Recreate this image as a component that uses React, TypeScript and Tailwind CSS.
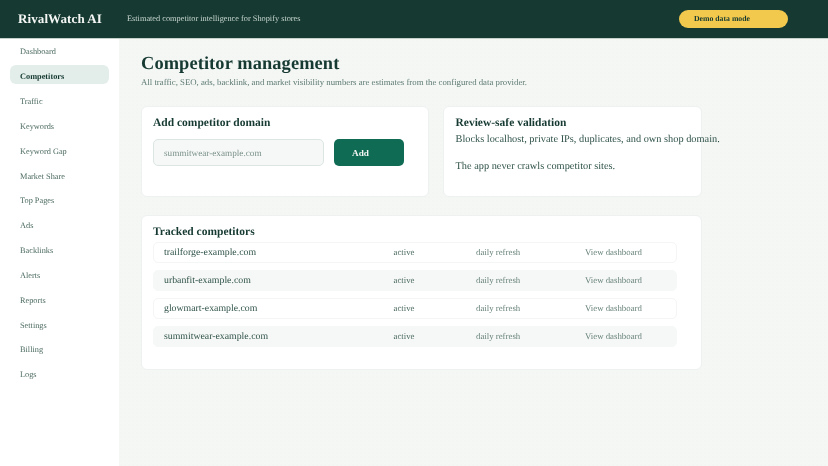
const navItems = ['Dashboard', 'Competitors', 'Traffic', 'Keywords', 'Keyword Gap', 'Market Share', 'Top Pages', 'Ads', 'Backlinks', 'Alerts', 'Reports', 'Settings', 'Billing', 'Logs'];

const competitors = ['trailforge-example.com', 'urbanfit-example.com', 'glowmart-example.com', 'summitwear-example.com'];

export default function App() {
  return (
    <div className="flex h-[466px] w-[828px] flex-col overflow-hidden bg-[#f5f7f5] font-['Liberation_Serif',serif] text-[#163a32] blur-[0.2px] [text-rendering:geometricPrecision]">
      <header className="flex h-[39px] shrink-0 items-center border-b border-[#c5d0cb] bg-[#163a32] pl-[18px] pr-[40px]">
        <span className="text-[13px] font-bold tracking-[0.1px] text-[#f5f7f5]">RivalWatch AI</span>
        <span className="ml-[25px] text-[8.3px] text-[#c8d6d0]">Estimated competitor intelligence for Shopify stores</span>
        <span className="ml-auto flex h-[18px] w-[109px] items-center rounded-full bg-[#f2c94c] pl-[15px] text-[7.75px] font-bold text-[#163a32]">Demo data mode</span>
      </header>

      <div className="flex min-h-0 flex-1">
        <aside className="w-[119px] shrink-0 bg-white px-[10px] pt-[1px]">
          <nav className="flex flex-col gap-[5.85px]">
            {navItems.map((item) =>
              item === 'Competitors' ? (
                <a key={item} className="flex h-[19px] items-center rounded-[6px] bg-[#e3ede9] pl-[10px] pt-[6px] text-[8.3px] font-bold text-[#163a32]">{item}</a>
              ) : (
                <a key={item} className="flex h-[19px] items-center pl-[10px] pt-[6px] text-[8.3px] text-[#4d6b62]">{item}</a>
              ),
            )}
          </nav>
        </aside>

        <main className="flex-1 bg-[radial-gradient(circle,#eef2ef_0.6px,transparent_0.8px)] bg-size-[4px_4px] pl-[22px] pt-[11.5px]">
          <h1 className="text-[18.4px] font-bold leading-[24px] tracking-[0.1px]">Competitor management</h1>
          <p className="mt-[2.5px] text-[8.78px] leading-[10px] text-[#5d7a71]">All traffic, SEO, ads, backlink, and market visibility numbers are estimates from the configured data provider.</p>

          <div className="mt-[18.5px] flex gap-[14px]">
            <section className="h-[91px] w-[287.5px] rounded-[6px] border border-[#edf1ef] bg-white px-[11px] pt-[9px]">
              <h2 className="text-[11.5px] font-bold leading-[14px]">Add competitor domain</h2>
              <div className="mt-[9px] flex gap-[10px]">
                <div className="flex h-[27.5px] w-[171px] items-center rounded-[5px] border border-[#dbe6e2] bg-[#f6f8f7] pl-[10px] pt-[3px] text-[9.2px] text-[#7a918a]">summitwear-example.com</div>
                <button className="flex h-[27.5px] w-[70px] items-center rounded-[5px] bg-[#106b54] pl-[18px] pt-[3px] text-[9.2px] font-bold text-[#f5f7f5]">Add</button>
              </div>
            </section>
            <section className="h-[91px] w-[259px] rounded-[6px] border border-[#edf1ef] bg-white px-[12px] pt-[9px]">
              <h2 className="text-[11.5px] font-bold leading-[14px]">Review-safe validation</h2>
              <p className="mt-[4px] whitespace-nowrap text-[10.35px] leading-[12px] text-[#2f5249]">Blocks localhost, private IPs, duplicates, and own shop domain.</p>
              <p className="mt-[15px] whitespace-nowrap text-[10.35px] leading-[12px] text-[#2f5249]">The app never crawls competitor sites.</p>
            </section>
          </div>

          <section className="mt-[18.5px] h-[155px] w-[561px] rounded-[6px] border border-[#edf1ef] bg-white px-[11px] pt-[9px]">
            <h2 className="text-[11.5px] font-bold leading-[14px]">Tracked competitors</h2>
            <div className="mt-[2.5px] flex flex-col gap-[6.5px]">
              {competitors.map((domain, i) => (
                <div key={domain} className={i % 2 === 0 ? 'flex h-[21.5px] w-[524px] items-center rounded-[5px] border border-[#f3f6f4] bg-white pl-[10px] pt-[1px]' : 'flex h-[21.5px] w-[524px] items-center rounded-[5px] border border-[#f6f8f7] bg-[#f6f8f7] pl-[10px] pt-[1px]'}>
                  <span className="mt-[1px] w-[229.5px] text-[9.8px] text-[#2f5249]">{domain}</span>
                  <span className="w-[82.5px] text-[8.8px] text-[#4d6b62]">active</span>
                  <span className="w-[109px] text-[8.8px] text-[#6b857d]">daily refresh</span>
                  <span className="text-[8.8px] text-[#6b857d]">View dashboard</span>
                </div>
              ))}
            </div>
          </section>
        </main>
      </div>
    </div>
  );
}
